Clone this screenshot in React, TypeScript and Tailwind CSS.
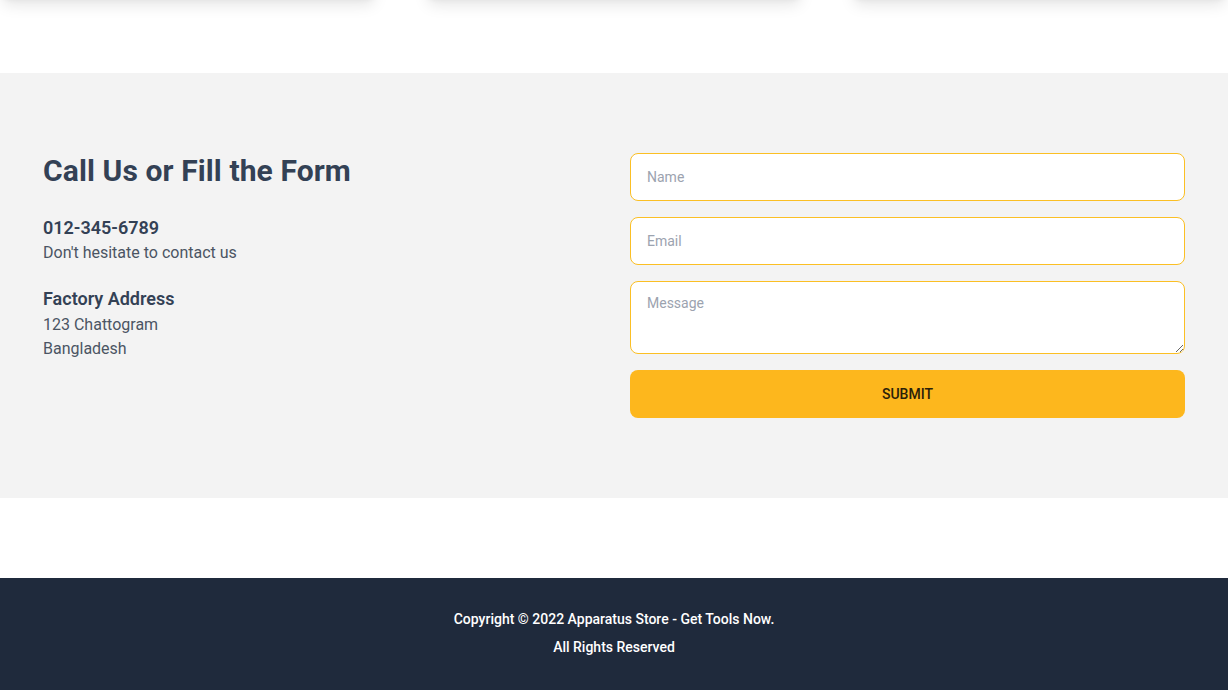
import React from 'react';

const Contact = () => {
  return (
    <div className="min-h-screen bg-white font-['Roboto',_'Liberation_Sans',_sans-serif] overflow-hidden">
      {/* Product cards (scrolled past) */}
      <section className="pb-[75px]">
        <div className="-mt-[302px] grid grid-cols-3 gap-12">
          {[1, 2, 3].map((i) => (
            <div key={i} className="h-[300px] bg-white rounded-lg shadow-lg" />
          ))}
        </div>
      </section>

      {/* Contact */}
      <section className="bg-[#f3f3f3] py-20 px-[43px]">
        <div className="grid grid-cols-2 gap-8">
          <div>
            <h2 className="text-[30px] leading-9 font-bold tracking-[0.1px] text-[#334155]">Call Us or Fill the Form</h2>
            <div className="mt-[26px]">
              <h3 className="text-lg leading-[26px] font-semibold text-[#334155]">012-345-6789</h3>
              <p className="text-base leading-6 text-[#4b5563]">Don't hesitate to contact us</p>
            </div>
            <div className="mt-[20px]">
              <h3 className="text-lg leading-[27px] font-semibold text-[#334155]">Factory Address</h3>
              <p className="mt-px text-base leading-6 text-[#4b5563]">123 Chattogram</p>
              <p className="text-base leading-6 text-[#4b5563]">Bangladesh</p>
            </div>
          </div>

          <form className="flex flex-col gap-4">
            <input
              type="text"
              placeholder="Name"
              className="h-12 w-full rounded-lg border border-[#fbbf24] bg-white px-4 text-sm text-gray-700 placeholder:text-[#9ca3af] outline-none"
            />
            <input
              type="email"
              placeholder="Email"
              className="h-12 w-full rounded-lg border border-[#fbbf24] bg-white px-4 text-sm text-gray-700 placeholder:text-[#9ca3af] outline-none"
            />
            <textarea
              placeholder="Message"
              className="block h-[73px] w-full rounded-lg border border-[#fbbf24] bg-white px-4 pt-[11px] text-sm text-gray-700 placeholder:text-[#9ca3af] outline-none"
            />
            <button
              type="button"
              className="h-12 w-full rounded-lg bg-[#fdb71d] text-sm font-medium text-[#2b2109] uppercase"
            >
              Submit
            </button>
          </form>
        </div>
      </section>

      {/* Footer */}
      <footer className="mt-20 bg-[#1f2a3c] pt-[31px] pb-[36px] text-center text-sm font-medium text-white">
        <p className="leading-5">Copyright © 2022 Apparatus Store - Get Tools Now.</p>
        <p className="mt-2 leading-5">All Rights Reserved</p>
      </footer>
    </div>
  );
};

export default Contact;
